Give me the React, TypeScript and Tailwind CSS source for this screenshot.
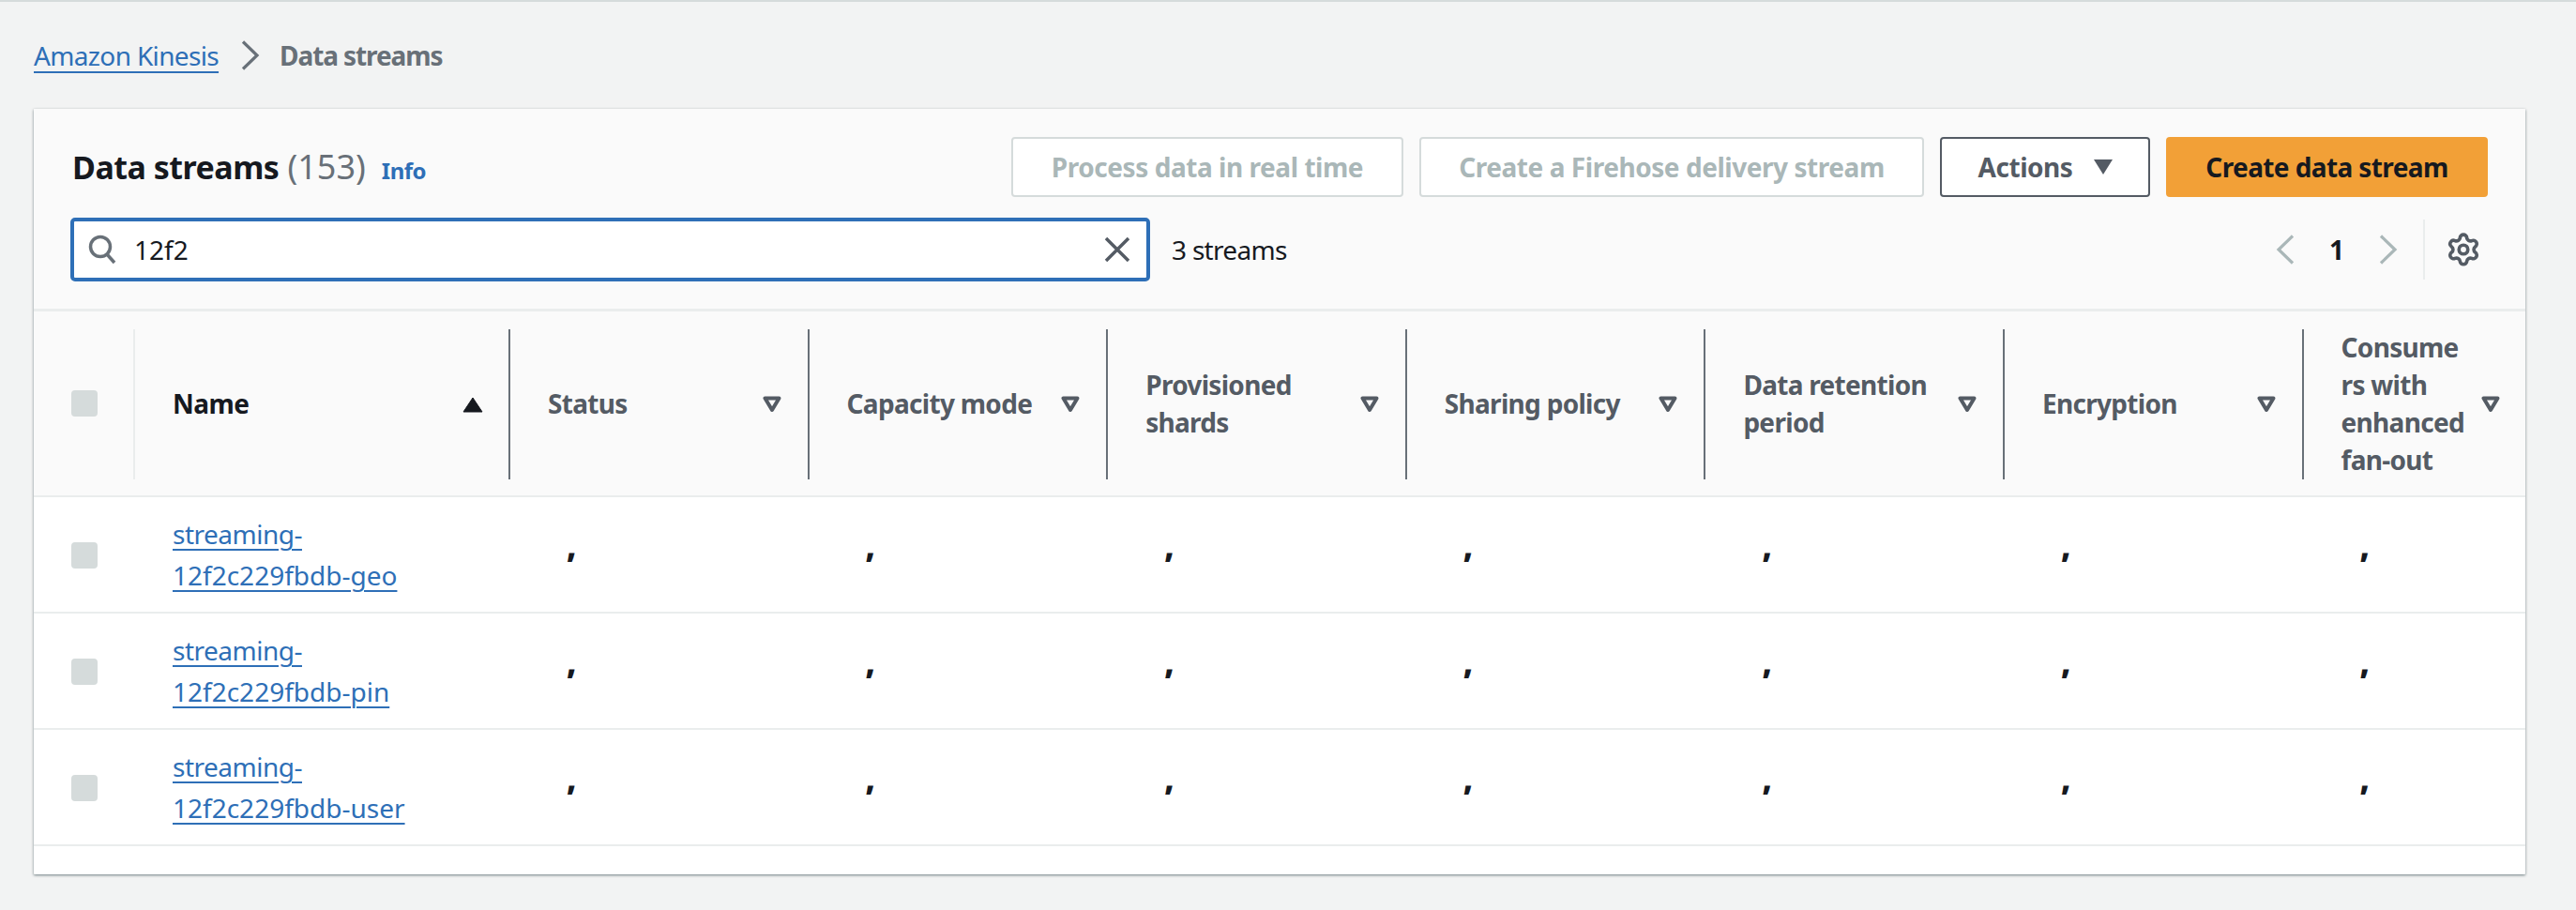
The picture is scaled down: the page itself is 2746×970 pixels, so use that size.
import React from 'react';
import { Settings } from 'lucide-react';

const COLUMNS: { label: string; textClass?: string; padClass?: string }[] = [
  { label: 'Status' },
  { label: 'Capacity mode' },
  { label: 'Provisioned shards' },
  { label: 'Sharing policy' },
  { label: 'Data retention period' },
  { label: 'Encryption' },
  { label: 'Consumers with enhanced fan-out', textClass: 'w-[136px] wrap-anywhere', padClass: 'pr-[27px]' },
];

const STREAMS = ['streaming-12f2c229fbdb-geo', 'streaming-12f2c229fbdb-pin', 'streaming-12f2c229fbdb-user'];

const GRID = 'grid grid-cols-[108px_398px_repeat(6,318.6px)_1fr]';

const CaretOutline: React.FC = () => (
  <svg width="20" height="18" viewBox="0 0 20 18" className="shrink-0">
    <path d="M2.5 2.5h15L10 15z" fill="none" stroke="#545b64" strokeWidth="4" strokeLinejoin="round" />
  </svg>
);

const Chevron: React.FC<{ dir: 'left' | 'right'; color: string; className?: string }> = ({ dir, color, className }) => (
  <svg width="20" height="32" viewBox="0 0 20 32" className={className}>
    <path d={dir === 'left' ? 'M18 1.5 3 16l15 14.5' : 'M2 1.5 17 16 2 30.5'} fill="none" stroke={color} strokeWidth="3.2" />
  </svg>
);

const Checkbox: React.FC = () => <div className="h-[28px] w-[28px] rounded-[4px] bg-[#d5dbdb]" />;

const HeaderCell: React.FC<{ label: string; textClass?: string; padClass?: string }> = ({ label, textClass, padClass }) => (
  <div className="flex items-center py-[19px]">
    <div className={`flex h-[160px] w-full items-center justify-between border-l-2 border-[#687078] pl-[40px] ${padClass ?? 'pr-[28px]'}`}>
      <span className={`mb-[3px] text-[28px] font-bold leading-[40px] tracking-[-0.7px] text-[#545b64] ${textClass ?? 'max-w-[230px]'}`}>{label}</span>
      <CaretOutline />
    </div>
  </div>
);

const StreamRow: React.FC<{ name: string }> = ({ name }) => {
  const [prefix, rest] = [name.slice(0, 10), name.slice(10)];
  return (
    <div className={`${GRID} h-[124px] border-b-[2px] border-[#eaeded] bg-white`}>
      <div className="flex items-center pl-[40px] pt-[2px]">
        <Checkbox />
      </div>
      <div className="flex flex-col justify-center pl-[40px] text-[28px] leading-[44px] text-[#2e6fb7]">
        <a className="w-fit tracking-[-0.5px] underline decoration-2 underline-offset-[5px]">{prefix}</a>
        <a className="w-fit underline decoration-2 underline-offset-[5px]">{rest}</a>
      </div>
      {COLUMNS.map((col) => (
        <div key={col.label} className="flex items-center pl-[62px]">
          <span className="mb-[20px] text-[34px] font-black leading-[40px] text-[#16191f]">,</span>
        </div>
      ))}
    </div>
  );
};

export default function App() {
  return (
    <div className="h-[970px] w-[2746px] overflow-hidden border-t-2 border-[#d5dbdb] bg-[#f2f3f3] font-['Noto_Sans',sans-serif] text-[28px]">
      <nav className="flex h-[114px] items-center px-[36px]">
        <a className="tracking-[-0.65px] text-[#2e6fb7] underline decoration-2 underline-offset-[6px]">Amazon Kinesis</a>
        <Chevron dir="right" color="#687078" className="ml-[24px] mr-[21px]" />
        <span className="font-bold tracking-[-1.1px] text-[#687078]">Data streams</span>
      </nav>

      <section className="ml-[36px] h-[816px] w-[2656px] overflow-hidden rounded-[1px] bg-white shadow-[0_1px_3px_0_rgba(0,28,36,0.55)]">
        <div className="border-b-[3px] border-[#eaeded] bg-[#fafafa] pb-[29px] pl-[39px] pr-[40px] pt-[30px]">
          <div className="flex h-[64px] items-center justify-between">
            <div className="ml-[2px] flex items-baseline">
              <h1 className="text-[34px] font-bold tracking-[-0.5px] text-[#16191f]">Data streams</h1>
              <span className="ml-[9px] text-[36px] text-[#687078]">(153)</span>
              <a className="ml-[17px] text-[24px] font-bold tracking-[-0.5px] text-[#2e6fb7]">Info</a>
            </div>
            <div className="flex gap-[17px] text-[28px] font-bold tracking-[-0.45px]">
              <button className="h-[64px] w-[418px] rounded-[4px] border-2 border-[#d5dbdb] bg-white text-[#aab7b8]">Process data in real time</button>
              <button className="h-[64px] w-[538px] rounded-[4px] border-2 border-[#d5dbdb] bg-white text-[#aab7b8]">Create a Firehose delivery stream</button>
              <button className="flex h-[64px] w-[224px] items-center justify-center gap-[22px] rounded-[4px] border-2 border-[#545b64] bg-white pl-[2px] text-[#545b64]">
                Actions
                <svg width="22" height="18" viewBox="0 0 22 18"><path d="M1 1h20L11 17z" fill="#545b64" /></svg>
              </button>
              <button className="h-[64px] w-[343px] rounded-[4px] bg-[#f2a037] tracking-[-0.6px] text-[#16191f]">Create data stream</button>
            </div>
          </div>

          <div className="mt-[22px] flex h-[68px] items-center">
            <div className="flex h-[68px] w-[1151px] items-center rounded-[5px] border-[4px] border-[#2e6fb7] bg-white pl-[15px] pr-[17px]">
              <svg width="30" height="32" viewBox="0 0 30 32" className="shrink-0">
                <circle cx="13" cy="13" r="10.5" fill="none" stroke="#687078" strokeWidth="3.5" />
                <path d="M20 21l8 9" stroke="#687078" strokeWidth="3.5" fill="none" />
              </svg>
              <span className="ml-[19px] flex-1 text-[28px] text-[#16191f]">12f2</span>
              <svg width="28" height="28" viewBox="0 0 28 28" className="shrink-0">
                <path d="M2 2l24 24M26 2 2 26" stroke="#545b64" strokeWidth="3.5" fill="none" />
              </svg>
            </div>
            <span className="ml-[23px] tracking-[-0.7px] text-[#16191f]">3 streams</span>
            <div className="ml-auto flex items-center">
              <Chevron dir="left" color="#aab7b8" />
              <span className="mx-[37px] font-bold text-[#16191f]">1</span>
              <Chevron dir="right" color="#aab7b8" />
              <div className="ml-[27px] mr-[7px] flex h-[64px] items-center border-l-2 border-[#eaeded] pl-[22px]">
                <Settings size={38} color="#545b64" strokeWidth={2.3} />
              </div>
            </div>
          </div>
        </div>

        <div className={`${GRID} h-[198px] border-b-[2px] border-[#eaeded] bg-[#fafafa]`}>
          <div className="flex items-center justify-between pl-[40px]">
            <div className="mb-[2px]">
              <Checkbox />
            </div>
            <div className="h-[160px] w-[2px] bg-[#eaeded]" />
          </div>
          <div className="flex items-center pl-[40px] pr-[27px]">
            <span className="mb-[3px] flex-1 font-bold tracking-[-0.5px] text-[#16191f]">Name</span>
            <svg width="22" height="17" viewBox="0 0 22 17"><path d="M11 1l10 15H1z" fill="#16191f" stroke="#16191f" strokeLinejoin="round" /></svg>
          </div>
          {COLUMNS.map((col) => (
            <HeaderCell key={col.label} label={col.label} textClass={col.textClass} padClass={col.padClass} />
          ))}
        </div>

        {STREAMS.map((name) => (
          <StreamRow key={name} name={name} />
        ))}
      </section>
    </div>
  );
}
